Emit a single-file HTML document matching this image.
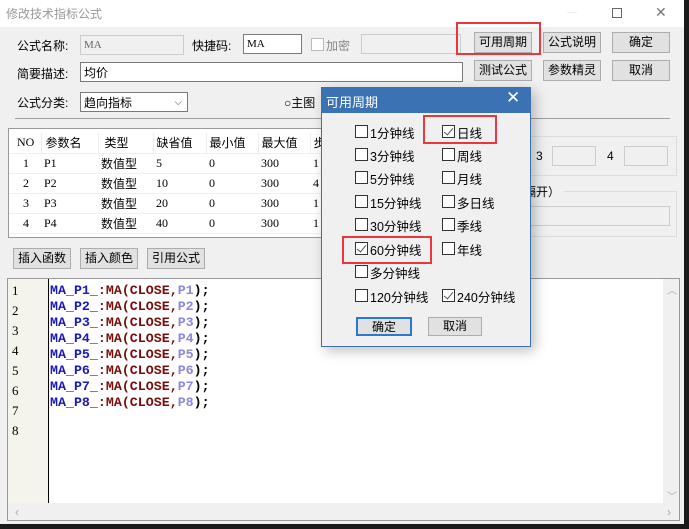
<!DOCTYPE html>
<html><head><meta charset="utf-8"><style>
*{box-sizing:border-box;margin:0;padding:0}
body{width:689px;height:529px;overflow:hidden;background:#1a1a1a;font-family:"Liberation Sans","Noto Sans CJK SC",sans-serif;font-size:12px;color:#000;position:relative}
.a{position:absolute}
.win{left:0;top:0;width:684px;height:524px;background:#f0f0f0}
.tb{left:0;top:0;width:684px;height:27px;background:#fff}
.in{position:absolute;background:#fff;border:1px solid #7a7a7a;height:20px;font-size:11px;padding:3px 3px;font-family:"Liberation Serif","Noto Sans CJK SC",serif}
.btn{position:absolute;background:#e1e1e1;border:1px solid #adadad;height:21px;text-align:center;line-height:19px;font-size:12px}
.lbl{position:absolute;font-size:12px}
.red{position:absolute;border:2px solid #e8383d}
.cb{position:absolute;width:13px;height:13px;border:1px solid #333;background:#fff}
.cb.c::after{content:"";position:absolute;left:3px;top:0px;width:4px;height:8px;border:solid #555;border-width:0 1.5px 1.5px 0;transform:rotate(40deg)}
.ck{position:absolute;font-size:12.5px}
.code{position:absolute;left:50px;font-family:"Liberation Mono",monospace;font-weight:bold;font-size:13.3px;line-height:16px}
.b{color:#1a1ab4}.m{color:#7a0c0c}.p{color:#8a88e0}
.ln{position:absolute;left:12px;font-family:"Liberation Serif",serif;font-size:13px}
td{height:20px;font-size:12px;padding-left:3px;border-bottom:1px solid #f0f0f0}
</style></head><body>
<div class="a win"></div>
<div class="a tb"></div>
<div class="lbl" style="left:6px;top:5px;color:#999">修改技术指标公式</div>
<div class="a" style="left:567px;top:12px;width:10px;height:1px;background:#eee"></div>
<div class="a" style="left:612px;top:8px;width:10px;height:10px;border:1px solid #666"></div>
<div class="a" style="left:655px;top:4px;font-size:14px;color:#777">✕</div>

<div class="lbl" style="left:17px;top:37px">公式名称:</div>
<div class="in" style="left:80px;top:35px;width:104px;background:#f0f0f0;border-color:#ccc;color:#666">MA</div>
<div class="lbl" style="left:192px;top:37px">快捷码:</div>
<div class="in" style="left:243px;top:34px;width:59px">MA</div>
<div class="cb" style="left:311px;top:38px;border-color:#bbb"></div>
<div class="lbl" style="left:326px;top:37px;color:#888">加密</div>
<div class="in" style="left:361px;top:34px;width:100px;background:#f0f0f0;border-color:#ccc"></div>
<div class="btn" style="left:474px;top:32px;width:58px">可用周期</div>
<div class="btn" style="left:543px;top:32px;width:58px">公式说明</div>
<div class="btn" style="left:612px;top:32px;width:58px">确定</div>
<div class="red" style="left:456px;top:22px;width:85px;height:33px"></div>

<div class="lbl" style="left:17px;top:65px">简要描述:</div>
<div class="in" style="left:80px;top:62px;width:383px;font-size:12px;padding-top:1px;font-family:'Noto Sans CJK SC',sans-serif">均价</div>
<div class="btn" style="left:474px;top:60px;width:58px">测试公式</div>
<div class="btn" style="left:543px;top:60px;width:58px">参数精灵</div>
<div class="btn" style="left:612px;top:60px;width:58px">取消</div>

<div class="lbl" style="left:17px;top:94px">公式分类:</div>
<div class="in" style="left:80px;top:92px;width:108px;font-size:12px;padding-top:1px;font-family:'Noto Sans CJK SC',sans-serif">趋向指标<span style="position:absolute;right:5px;top:0;color:#555;font-size:10px">⌵</span></div>
<div class="lbl" style="left:284px;top:94px">○主图</div>
<div class="a" style="left:15px;top:118px;width:655px;height:1px;background:#a0a0a0"></div>

<div class="a" style="left:8px;top:128px;width:330px;height:110px;background:#fff;border:1px solid #999">
<table style="border-collapse:collapse;font-family:'Liberation Serif','Noto Sans CJK SC',serif;margin-top:4px">
<tr style="font-size:12px"><td style="width:32px;padding-left:8px">NO</td><td style="width:57px;padding-left:4px;border-left:1px solid #eee">参数名</td><td style="width:55px;padding-left:6px;border-left:1px solid #eee">类型</td><td style="width:53px;border-left:1px solid #eee">缺省值</td><td style="width:52px;border-left:1px solid #eee">最小值</td><td style="width:52px;border-left:1px solid #eee">最大值</td><td style="border-left:1px solid #eee">步</td></tr>
<tr><td style="padding-left:14px">1</td><td>P1</td><td>数值型</td><td>5</td><td>0</td><td>300</td><td>1</td></tr>
<tr><td style="padding-left:14px">2</td><td>P2</td><td>数值型</td><td>10</td><td>0</td><td>300</td><td>4</td></tr>
<tr><td style="padding-left:14px">3</td><td>P3</td><td>数值型</td><td>20</td><td>0</td><td>300</td><td>1</td></tr>
<tr><td style="padding-left:14px">4</td><td>P4</td><td>数值型</td><td>40</td><td>0</td><td>300</td><td>1</td></tr>
</table></div>

<div class="a" style="left:480px;top:136px;width:197px;height:40px;border:1px solid #ddd"></div>
<div class="lbl" style="left:536px;top:149px">3</div>
<div class="in" style="left:552px;top:146px;width:44px;background:#f0f0f0;border-color:#ccc"></div>
<div class="lbl" style="left:607px;top:149px">4</div>
<div class="in" style="left:624px;top:146px;width:44px;background:#f0f0f0;border-color:#ccc"></div>
<div class="a" style="left:480px;top:191px;width:197px;height:46px;border:1px solid #ddd"></div>
<div class="lbl" style="left:500px;top:183px;background:#f0f0f0;padding-right:4px">分号隔开）</div>
<div class="in" style="left:530px;top:206px;width:140px;background:#f0f0f0;border-color:#ccc"></div>

<div class="btn" style="left:13px;top:248px;width:58px">插入函数</div>
<div class="btn" style="left:80px;top:248px;width:58px">插入颜色</div>
<div class="btn" style="left:147px;top:248px;width:58px">引用公式</div>

<div class="a" style="left:7px;top:278px;width:673px;height:243px;background:#fff;border:1px solid #999"></div>
<div class="a" style="left:8px;top:279px;width:40px;height:224px;background:#f4f4ec"></div>
<div class="a" style="left:48px;top:279px;width:1px;height:224px;background:#000"></div>
<div class="a" style="left:663px;top:279px;width:16px;height:224px;background:#f0f0f0"></div>
<div class="a" style="left:8px;top:503px;width:671px;height:17px;background:#f0f0f0"></div>
<div class="lbl" style="left:15px;top:505px;color:#aaa">‹</div>
<div class="lbl" style="left:667px;top:505px;color:#aaa">›</div>
<div class="lbl" style="left:667px;top:282px;color:#aaa;font-size:10px">︿</div>
<div class="lbl" style="left:667px;top:488px;color:#aaa;font-size:10px">﹀</div>

<div class="ln" style="top:283px">1</div><div class="ln" style="top:303px">2</div><div class="ln" style="top:323px">3</div><div class="ln" style="top:343px">4</div><div class="ln" style="top:363px">5</div><div class="ln" style="top:383px">6</div><div class="ln" style="top:403px">7</div><div class="ln" style="top:423px">8</div>
<div class="code" style="top:283px">
<div><span class="b">MA_P1_</span><span class="m">:MA(CLOSE,</span><span class="p">P1</span>);</div>
<div><span class="b">MA_P2_</span><span class="m">:MA(CLOSE,</span><span class="p">P2</span>);</div>
<div><span class="b">MA_P3_</span><span class="m">:MA(CLOSE,</span><span class="p">P3</span>);</div>
<div><span class="b">MA_P4_</span><span class="m">:MA(CLOSE,</span><span class="p">P4</span>);</div>
<div><span class="b">MA_P5_</span><span class="m">:MA(CLOSE,</span><span class="p">P5</span>);</div>
<div><span class="b">MA_P6_</span><span class="m">:MA(CLOSE,</span><span class="p">P6</span>);</div>
<div><span class="b">MA_P7_</span><span class="m">:MA(CLOSE,</span><span class="p">P7</span>);</div>
<div><span class="b">MA_P8_</span><span class="m">:MA(CLOSE,</span><span class="p">P8</span>);</div>
</div>

<!-- dialog -->
<div class="a" style="left:321px;top:87px;width:210px;height:260px;background:#f0f0f0;border:1px solid #3b6fad;box-shadow:4px 4px 12px rgba(0,0,0,.25)"></div>
<div class="a" style="left:321px;top:87px;width:210px;height:26px;background:#3b72b3"></div>
<div class="lbl" style="left:326px;top:92px;color:#fff;font-size:13px">可用周期</div>
<div class="lbl" style="left:506px;top:88px;color:#fff;font-size:17px">✕</div>

<div class="cb" style="left:355px;top:125px"></div><div class="ck" style="left:370px;top:123px">1分钟线</div>
<div class="cb" style="left:355px;top:148px"></div><div class="ck" style="left:370px;top:146px">3分钟线</div>
<div class="cb" style="left:355px;top:171px"></div><div class="ck" style="left:370px;top:169px">5分钟线</div>
<div class="cb" style="left:355px;top:195px"></div><div class="ck" style="left:370px;top:193px">15分钟线</div>
<div class="cb" style="left:355px;top:218px"></div><div class="ck" style="left:370px;top:216px">30分钟线</div>
<div class="cb c" style="left:355px;top:242px"></div><div class="ck" style="left:370px;top:240px">60分钟线</div>
<div class="cb" style="left:355px;top:265px"></div><div class="ck" style="left:370px;top:263px">多分钟线</div>
<div class="cb" style="left:355px;top:289px"></div><div class="ck" style="left:370px;top:287px">120分钟线</div>

<div class="cb c" style="left:442px;top:125px"></div><div class="ck" style="left:457px;top:123px">日线</div>
<div class="cb" style="left:442px;top:148px"></div><div class="ck" style="left:457px;top:146px">周线</div>
<div class="cb" style="left:442px;top:171px"></div><div class="ck" style="left:457px;top:169px">月线</div>
<div class="cb" style="left:442px;top:195px"></div><div class="ck" style="left:457px;top:193px">多日线</div>
<div class="cb" style="left:442px;top:218px"></div><div class="ck" style="left:457px;top:216px">季线</div>
<div class="cb" style="left:442px;top:242px"></div><div class="ck" style="left:457px;top:240px">年线</div>
<div class="cb c" style="left:442px;top:289px"></div><div class="ck" style="left:457px;top:287px">240分钟线</div>

<div class="red" style="left:423px;top:115px;width:74px;height:29px"></div>
<div class="red" style="left:342px;top:236px;width:90px;height:28px"></div>

<div class="btn" style="left:356px;top:317px;width:56px;height:19px;line-height:17px;border:2px solid #2a78d0">确定</div>
<div class="btn" style="left:428px;top:317px;width:54px;height:19px;line-height:17px">取消</div>
</body></html>
